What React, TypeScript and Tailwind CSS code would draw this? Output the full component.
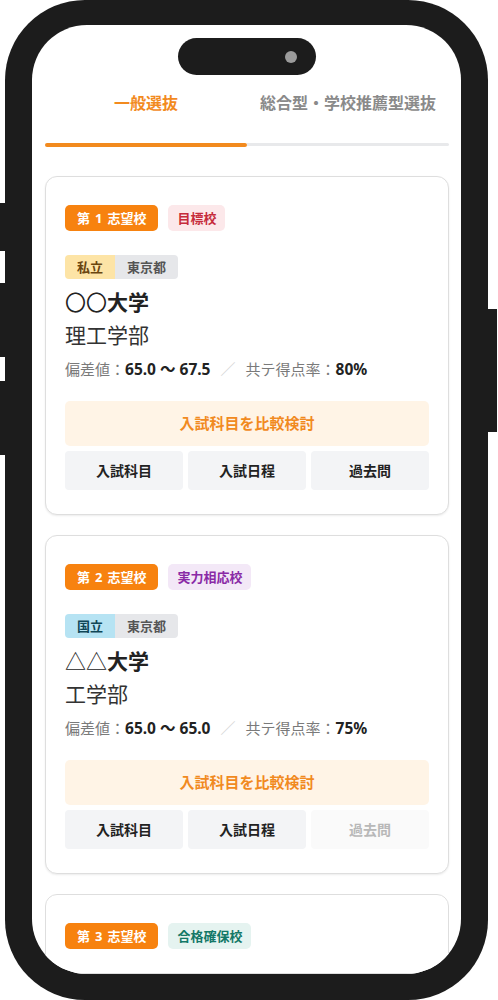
import React from "react";

type School = {
  rank: number;
  level: string;
  levelClass: string;
  kind: string;
  kindClass: string;
  pref: string;
  name: string;
  mark: string;
  faculty: string;
  dev: string;
  rate: string;
  pastDisabled?: boolean;
};

const schools: School[] = [
  {
    rank: 1,
    level: "目標校",
    levelClass: "bg-[#fce8ea] text-[#c62b3b]",
    kind: "私立",
    kindClass: "bg-[#fde4a6] text-[#6a4610]",
    pref: "東京都",
    mark: "〇〇",
    name: "大学",
    faculty: "理工学部",
    dev: "65.0 〜 67.5",
    rate: "80%",
  },
  {
    rank: 2,
    level: "実力相応校",
    levelClass: "bg-[#f3e8f7] text-[#8a2aa6]",
    kind: "国立",
    kindClass: "bg-[#b6e3f3] text-[#0f4657]",
    pref: "東京都",
    mark: "△△",
    name: "大学",
    faculty: "工学部",
    dev: "65.0 〜 65.0",
    rate: "75%",
    pastDisabled: true,
  },
];

function RankBadges({ rank, level, levelClass }: { rank: number; level: string; levelClass: string }) {
  return (
    <div className="flex items-center gap-[10px]">
      <span className="h-[26px] px-[12px] rounded-[5px] bg-[#f7820f] text-white text-[13px] font-bold leading-[26px]">
        第<span className="mx-[5px]">{rank}</span>志望校
      </span>
      <span className={`h-[26px] px-[9px] rounded-[5px] text-[13px] font-bold leading-[26px] ${levelClass}`}>
        {level}
      </span>
    </div>
  );
}

function SchoolCard({ s }: { s: School }) {
  return (
    <div className="border border-[#dedede] rounded-[12px] bg-white shadow-[0_1px_2px_rgba(0,0,0,0.08)] pt-[28px] px-[19px] pb-[24px]">
      <RankBadges rank={s.rank} level={s.level} levelClass={s.levelClass} />

      <div className="mt-[24px] flex">
        <span className={`h-[24px] px-3 rounded-l-[4px] text-[13px] font-bold leading-[24px] ${s.kindClass}`}>
          {s.kind}
        </span>
        <span className="h-[24px] px-3 rounded-r-[4px] bg-[#e6e7ea] text-[#555] text-[13px] font-bold leading-[24px]">
          {s.pref}
        </span>
      </div>

      <div className="mt-[7px] text-[21px] leading-[32px] text-[#222]">
        <span className="font-normal">{s.mark}</span>
        <span className="font-bold">{s.name}</span>
      </div>
      <div className="text-[21px] leading-[34px] text-[#333]">{s.faculty}</div>

      <div className="mt-[5px] text-[15px] leading-[24px] text-[#7a7a7a] flex items-center">
        <span>偏差値：</span>
        <span className="font-bold text-[#222] text-[15.5px]">{s.dev}</span>
        <span className="mx-[10px] text-[#d4d4d4]">／</span>
        <span>共テ得点率：</span>
        <span className="font-bold text-[#222] text-[15.5px]">{s.rate}</span>
      </div>

      <button className="mt-[20px] w-full h-[45px] rounded-[5px] bg-[#fff4e6] text-[#f18a1f] text-[15px] font-bold">
        入試科目を比較検討
      </button>

      <div className="mt-[5px] grid grid-cols-3 gap-[5px]">
        <button className="h-[39px] rounded-[4px] bg-[#f3f4f6] text-[#222] text-[14px] font-bold">入試科目</button>
        <button className="h-[39px] rounded-[4px] bg-[#f3f4f6] text-[#222] text-[14px] font-bold">入試日程</button>
        <button
          className={`h-[39px] rounded-[4px] text-[14px] font-bold ${
            s.pastDisabled ? "bg-[#fafafa] text-[#b8b8b8]" : "bg-[#f3f4f6] text-[#222]"
          }`}
        >
          過去問
        </button>
      </div>
    </div>
  );
}

export default function App() {
  return (
    <div
      className="w-[498px] h-[1000px] bg-white relative overflow-hidden"
      style={{ fontFamily: '"Noto Sans", "Noto Sans CJK JP", sans-serif' }}
    >
      {/* side buttons */}
      <div className="absolute left-0 top-[203px] w-[6px] h-[48px] bg-[#1c1c1c]" />
      <div className="absolute left-0 top-[283px] w-[6px] h-[74px] bg-[#1c1c1c]" />
      <div className="absolute left-0 top-[381px] w-[6px] h-[74px] bg-[#1c1c1c]" />
      <div className="absolute right-[1px] top-[309px] w-[10px] h-[123px] bg-[#1c1c1c]" />

      {/* phone body */}
      <div className="relative ml-[5px] w-[483px] h-[1000px] rounded-[80px] bg-[#1c1c1c] pt-[25px] px-[27px] pb-[26px]">
        <div className="w-full h-full bg-white rounded-[55px] overflow-hidden flex flex-col">
          {/* island */}
          <div className="mt-[13px] mx-auto w-[138px] h-[39px] rounded-full bg-[#1c1c1c] flex items-center justify-end pr-[19px]">
            <div className="w-[12px] h-[12px] rounded-full bg-[#9b9b9b]" />
          </div>

          <div className="pl-[13px] pr-[12px]">
            {/* tabs */}
            <div className="mt-[16px] grid grid-cols-2 text-[16px] font-bold leading-[24px]">
              <div className="text-center text-[#f28a1e]">一般選抜</div>
              <div className="text-center text-[#8a8a8a]">総合型・学校推薦型選抜</div>
            </div>
            <div className="mt-[28px] grid grid-cols-2 items-start">
              <div className="h-[4px] rounded-full bg-[#f28a1e]" />
              <div className="h-[3px] rounded-r-full bg-[#e8e9eb]" />
            </div>

            <div className="mt-[29px] flex flex-col gap-[20px]">
              {schools.map((s) => (
                <SchoolCard key={s.rank} s={s} />
              ))}
              <div className="border border-[#dedede] rounded-[12px] bg-white pt-[28px] px-[19px] pb-[24px]">
                <RankBadges rank={3} level="合格確保校" levelClass="bg-[#e5f3f0] text-[#137867]" />
              </div>
            </div>
          </div>
        </div>
      </div>
    </div>
  );
}
